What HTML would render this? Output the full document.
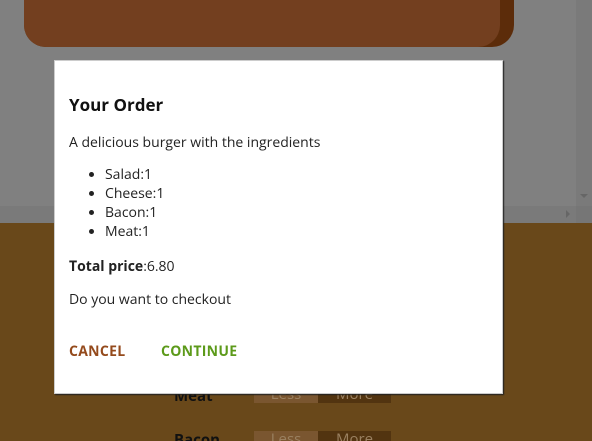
<!DOCTYPE html>
<html><head><style>
html,body{margin:0;padding:0;width:592px;height:441px;overflow:hidden;position:relative;background:#69481a;font-family:"Open Sans","Liberation Sans",sans-serif;}
.top{position:absolute;left:0;top:0;width:592px;height:223px;background:#808080;}
.vs{position:absolute;left:576px;top:0;width:16px;height:206px;background:#7a7a7a;}
.hs{position:absolute;left:0;top:206px;width:576px;height:17px;background:#7a7a7a;}
.corner{position:absolute;left:576px;top:206px;width:16px;height:17px;background:#767676;}
.bun{position:absolute;left:24px;top:-40px;width:490px;height:87px;background:#5c2c0a;border-radius:0 0 22px 22px;}
.bun2{position:absolute;left:24px;top:-40px;width:476px;height:87px;background:#733f1f;border-radius:0 0 22px 22px;}
.row{position:absolute;left:174px;font-weight:bold;font-size:15px;color:#111;}
.btn{position:absolute;height:17px;font-size:15px;line-height:17px;text-align:center;color:#9a8060;}
.modal{position:absolute;left:54px;top:60px;width:449px;height:334px;background:#fff;border:1px solid #ccc;box-shadow:1px 1px 1px #222;box-sizing:border-box;color:#222;font-size:14px;}
.modal h3{position:absolute;left:14px;top:32px;margin:0;font-size:17px;font-weight:bold;color:#111;}
.t{position:absolute;left:14px;margin:0;white-space:nowrap;}
ul{position:absolute;left:14px;top:104px;margin:0;padding-left:36px;line-height:19px;}
.b{position:absolute;top:281px;font-weight:bold;font-size:14px;letter-spacing:0.3px;}
</style></head><body>
<div class="row" style="top:386px">Meat</div>
<div class="btn" style="left:254px;top:386px;width:64px;background:#7a5630">Less</div>
<div class="btn" style="left:318px;top:386px;width:73px;background:#523410">More</div>
<div class="row" style="top:430px">Bacon</div>
<div class="btn" style="left:254px;top:431px;width:64px;background:#7a5630">Less</div>
<div class="btn" style="left:318px;top:431px;width:73px;background:#523410">More</div>
<div class="top"></div>
<div class="bun"></div><div class="bun2"></div>
<div class="vs"></div><div class="hs"></div><div class="corner"></div>
<div style="position:absolute;left:580px;top:194px;width:0;height:0;border-left:4px solid transparent;border-right:4px solid transparent;border-top:4px solid #666"></div>
<div style="position:absolute;left:566px;top:210px;width:0;height:0;border-top:4px solid transparent;border-bottom:4px solid transparent;border-left:4px solid #666"></div>
<div class="modal">
<h3>Your Order</h3>
<p class="t" style="top:72px">A delicious burger with the ingredients</p>
<ul><li>Salad:1</li><li>Cheese:1</li><li>Bacon:1</li><li>Meat:1</li></ul>
<p class="t" style="top:196px"><b>Total price</b>:6.80</p>
<p class="t" style="top:229px">Do you want to checkout</p>
<div class="b" style="left:14px;color:#944a1c">CANCEL</div>
<div class="b" style="left:106px;color:#5c9a1a">CONTINUE</div>
</div>
</body></html>
